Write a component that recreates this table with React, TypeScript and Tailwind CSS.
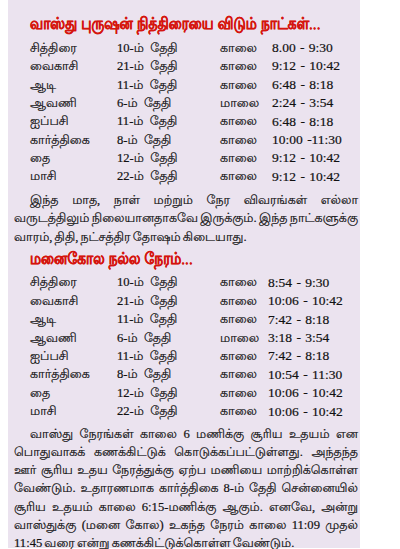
const table1 = [
  ["சித்திரை", "10-ம்  தேதி", "காலை", "8.00 - 9:30"],
  ["வைகாசி", "21-ம்  தேதி", "காலை", "9:12 - 10:42"],
  ["ஆடி", "11-ம்  தேதி", "காலை", "6:48 - 8:18"],
  ["ஆவணி", "6-ம்  தேதி", "மாலை", "2:24 - 3:54"],
  ["ஐப்பசி", "11-ம்  தேதி", "காலை", "6:48 - 8:18"],
  ["கார்த்திகை", "8-ம்  தேதி", "காலை", "10:00 -11:30"],
  ["தை", "12-ம்  தேதி", "காலை", "9:12 - 10:42"],
  ["மாசி", "22-ம்  தேதி", "காலை", "9:12 - 10:42"],
];

const table2 = [
  ["சித்திரை", "10-ம்  தேதி", "காலை", "8:54 - 9:30"],
  ["வைகாசி", "21-ம்  தேதி", "காலை", "10:06 - 10:42"],
  ["ஆடி", "11-ம்  தேதி", "காலை", "7:42 - 8:18"],
  ["ஆவணி", "6-ம்  தேதி", "மாலை", "3:18 - 3:54"],
  ["ஐப்பசி", "11-ம்  தேதி", "காலை", "7:42 - 8:18"],
  ["கார்த்திகை", "8-ம்  தேதி", "காலை", "10:54 - 11:30"],
  ["தை", "12-ம்  தேதி", "காலை", "10:06 - 10:42"],
  ["மாசி", "22-ம்  தேதி", "காலை", "10:06 - 10:42"],
];

const para1 = [
  "இந்த மாத, நாள் மற்றும் நேர விவரங்கள் எல்லா",
  "வருடத்திலும் நிலையானதாகவே இருக்கும். இந்த நாட்களுக்கு",
  "வாரம், திதி, நட்சத்திர தோஷம் கிடையாது.",
];

const para2 = [
  "வாஸ்து நேரங்கள் காலை 6 மணிக்கு சூரிய உதயம் என",
  "பொதுவாகக் கணக்கிட்டுக் கொடுக்கப்பட்டுள்ளது. அந்தந்த",
  "ஊர் சூரிய உதய நேரத்துக்கு ஏற்ப மணியை மாற்றிக்கொள்ள",
  "வேண்டும். உதாரணமாக கார்த்திகை 8-ம் தேதி சென்னையில்",
  "சூரிய உதயம் காலை 6:15-மணிக்கு ஆகும். எனவே, அன்று",
  "வாஸ்துக்கு (மனை கோல) உகந்த நேரம் காலை 11:09 முதல்",
  "11:45 வரை என்று கணக்கிட்டுக்கொள்ள வேண்டும்.",
];

function Table({ rows, wide }: { rows: string[][]; wide?: boolean }) {
  return (
    <div className="flex flex-col pl-[16px]">
      {rows.map((r, i) => (
        <div key={i} className="flex h-[18.4px] items-center whitespace-pre">
          <span className="w-[87px]">{r[0]}</span>
          <span className="w-[103px]">{r[1]}</span>
          <span className={wide ? "w-[52px]" : "w-[48px]"}>{r[2]}</span>
          <span className="text-[13.5px] [word-spacing:1px]">{r[3]}</span>
        </div>
      ))}
    </div>
  );
}

function Para({ lines }: { lines: string[] }) {
  return (
    <div className="flex flex-col">
      {lines.map((l, i) => (
        <p
          key={i}
          className={
            "h-[18.2px] leading-[18.2px] whitespace-nowrap [word-spacing:-1px] " +
            (i === 0 ? "pl-[16px] " : "") +
            (i < lines.length - 1 ? "text-justify [text-align-last:justify]" : "")
          }
        >
          {l}
        </p>
      ))}
    </div>
  );
}

export default function App() {
  return (
    <div className="w-[400px] h-[549px] bg-white">
      <div className="ml-[8px] w-[352px] h-[548px] bg-[#ebe3ef] pl-[6px] pr-[2px] pt-[15px] text-[12.6px] text-[#111] [-webkit-text-stroke:0.2px_#111] font-['Liberation_Serif','Lohit_Tamil','Noto_Sans_Tamil',serif]">
        <h1 className="pl-[16px] h-[20px] leading-[20px] whitespace-nowrap">
          <span className="inline-block origin-left scale-x-[0.86] text-[16px] font-bold text-[#d5150e] [-webkit-text-stroke:0.3px_#d5150e] font-['Lohit_Tamil','Liberation_Sans',sans-serif]">
            வாஸ்து புருஷன் நித்திரையை விடும் நாட்கள்...
          </span>
        </h1>
        <div className="mt-[4px]">
          <Table rows={table1} wide />
        </div>
        <div className="mt-[5px]">
          <Para lines={para1} />
        </div>
        <h2 className="mt-[4px] pl-[16px] h-[20px] leading-[20px] whitespace-nowrap">
          <span className="inline-block origin-left scale-x-[0.86] text-[16px] font-bold text-[#d5150e] [-webkit-text-stroke:0.3px_#d5150e] font-['Lohit_Tamil','Liberation_Sans',sans-serif]">
            மனைகோல நல்ல நேரம்...
          </span>
        </h2>
        <div className="mt-[4px]">
          <Table rows={table2} />
        </div>
        <div className="mt-[4px]">
          <Para lines={para2} />
        </div>
      </div>
    </div>
  );
}
